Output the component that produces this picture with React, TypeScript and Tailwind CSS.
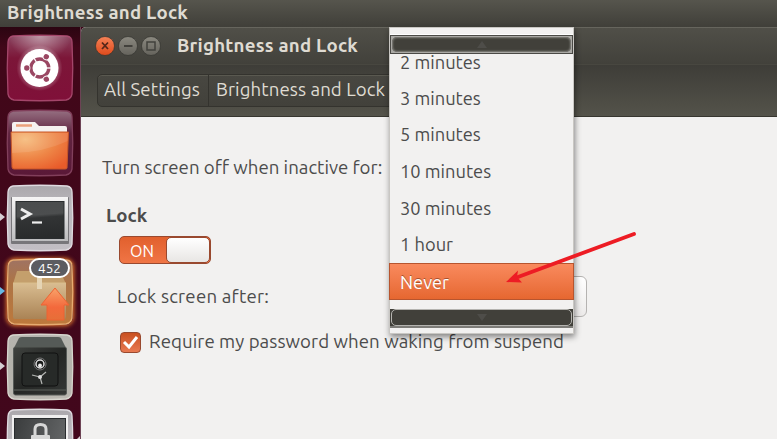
import React from 'react';

function TileBase({ id, from, mid, to, stroke }: { id: string; from: string; mid: string; to: string; stroke: string }) {
  return (
    <>
      <defs>
        <linearGradient id={id} x1="0" y1="0" x2="0" y2="1">
          <stop offset="0" stopColor={from} />
          <stop offset=".35" stopColor={mid} />
          <stop offset="1" stopColor={to} />
        </linearGradient>
      </defs>
      <path d="M6 1Q33 -.5 60 1Q65 2 65 7Q66.500 33 65 59Q64 64 59 65Q33 66.500 7 65Q2 64 1 59Q-.5 33 1 7Q1.500 2 6 1Z" fill={`url(#${id})`} stroke={stroke} strokeWidth="1.300" />
    </>
  );
}

function Tile({ children, arrow }: { children: React.ReactNode; arrow?: string }) {
  return (
    <div className="relative h-[66px] w-[66px] shrink-0">
      <svg width="66" height="66" viewBox="0 0 66 66" className="block overflow-visible">
        {arrow && <path d="M-7 28L-2 32L-7 36Z" fill={arrow} />}
        {children}
      </svg>
    </div>
  );
}

function DashTile() {
  return (
    <Tile>
      <TileBase id="dash" from="#8a4560" mid="#7c1638" to="#801039" stroke="#a4466a" />
      <defs>
        <radialGradient id="shine" cx=".5" cy="0" r=".5">
          <stop offset="0" stopColor="#fff" stopOpacity=".45" />
          <stop offset="1" stopColor="#fff" stopOpacity="0" />
        </radialGradient>
        <radialGradient id="halo">
          <stop offset=".7" stopColor="#fff" stopOpacity=".35" />
          <stop offset="1" stopColor="#fff" stopOpacity="0" />
        </radialGradient>
      </defs>
      <rect x="2" y="1" width="62" height="50" fill="url(#shine)" />
      <circle cx="32.500" cy="33" r="23" fill="url(#halo)" />
      <circle cx="32.500" cy="33" r="19" fill="#fff" />
      <circle cx="32.800" cy="33" r="9" fill="none" stroke="#9a4662" strokeWidth="3.400" />
      {[60, 180, 300].map((a) => (
        <g key={a} transform={`rotate(${a} 32.800 33)`}>
          <path d="M32.800 33H47" stroke="#fff" strokeWidth="1.300" transform="rotate(60 32.800 33)" />
          <circle cx="45.800" cy="33" r="3.600" fill="#fff" />
          <circle cx="45.800" cy="33" r="2.700" fill="#9a4662" />
        </g>
      ))}
    </Tile>
  );
}

function FolderTile() {
  return (
    <Tile>
      <TileBase id="files" from="#967082" mid="#602440" to="#5a1837" stroke="#813f5b" />
      <defs>
        <radialGradient id="folder" cx=".25" cy=".2" r=".95">
          <stop offset="0" stopColor="#f5ba79" />
          <stop offset=".55" stopColor="#ee8546" />
          <stop offset="1" stopColor="#e95b2a" />
        </radialGradient>
      </defs>
      <path d="M5 23V14Q5 12 7 12H28L32 16H58Q60 16 60 18V24Z" fill="#f5f1ef" />
      <path d="M9 15.500H25" stroke="#eaa07b" strokeWidth="2.500" />
      <path d="M4 22H61.500L60 58Q60 59 58 59H7Q5 59 5 57Z" fill="url(#folder)" stroke="#c75728" strokeWidth="1" />
      <path d="M4.500 23H61L60.700 31Q35 43 5 43Z" fill="#fff" opacity=".1" />
    </Tile>
  );
}

function TerminalTile() {
  return (
    <Tile arrow="#d6ced3">
      <TileBase id="termtile" from="#aaa7ab" mid="#bcb9be" to="#c2bec4" stroke="#dfdbe0" />
      <defs>
        <linearGradient id="termscreen" x1="0" y1="0" x2="0.100" y2="1">
          <stop offset="0" stopColor="#4a4c4d" />
          <stop offset=".4" stopColor="#4c4e4f" />
          <stop offset=".48" stopColor="#323435" />
          <stop offset="1" stopColor="#292b2c" />
        </linearGradient>
        <linearGradient id="termframe" x1="0" y1="0" x2="0" y2="1">
          <stop offset="0" stopColor="#f6f5f5" />
          <stop offset="1" stopColor="#bcbcbe" />
        </linearGradient>
      </defs>
      <rect x="4" y="12" width="58" height="47" rx="1" fill="#77767a" />
      <rect x="5" y="12" width="56" height="44" fill="url(#termframe)" />
      <rect x="9" y="16.500" width="48" height="37" fill="url(#termscreen)" stroke="#292c2e" />
      <path d="M14 24L23 29L14 34" fill="none" stroke="#eee" strokeWidth="3" />
      <path d="M25 37.500H35" stroke="#eee" strokeWidth="2.200" />
    </Tile>
  );
}

function UpdaterTile() {
  return (
    <div className="relative w-[66px] rounded-lg shadow-[0_0_4px_1px_#e3782c]">
      <Tile arrow="#67b9e5">
        <TileBase id="update" from="#9f7363" mid="#ad7446" to="#bd793c" stroke="#e7ab70" />
        <defs>
          <linearGradient id="box" x1="0" y1="0" x2="0" y2="1">
            <stop offset="0" stopColor="#d9bd91" />
            <stop offset="1" stopColor="#aa8355" />
          </linearGradient>
          <linearGradient id="up" x1="0" y1="0" x2="0" y2="1">
            <stop offset="0" stopColor="#f9a36a" />
            <stop offset=".6" stopColor="#f3693c" />
            <stop offset="1" stopColor="#e66f38" />
          </linearGradient>
        </defs>
        <path d="M6 25L10 12H53L59 25Z" fill="#c49f6c" />
        <path d="M6 24H59V58Q59 60 57 60H8Q6 60 6 58Z" fill="url(#box)" />
        <path d="M6 24H59" stroke="#d9bd8b" />
        <rect x="30" y="12" width="5" height="18" fill="#e5d4b4" />
        <path d="M48 29L62 46H57V61H40V46H34Z" fill="url(#up)" stroke="#ed6332" strokeWidth="1" />
      </Tile>
      <div className="absolute left-[22px] top-[-1px] flex h-[20px] w-[41px] items-center justify-center rounded-full border-2 border-white bg-[#5c5c61] text-[13.500px] leading-none text-white">452</div>
    </div>
  );
}

function SafeTile() {
  return (
    <Tile arrow="#d6ced3">
      <TileBase id="safe" from="#b6b4af" mid="#b4b3ac" to="#b9b7b0" stroke="#d7d6ce" />
      <defs>
        <linearGradient id="safeface" x1="0" y1="0" x2="1" y2="1">
          <stop offset="0" stopColor="#3f423f" />
          <stop offset=".5" stopColor="#252725" />
          <stop offset="1" stopColor="#343735" />
        </linearGradient>
      </defs>
      <path d="M7 14L12 4Q13 3 15 3H51Q53 3 54 4L59 14Z" fill="#555a57" />
      <rect x="6.500" y="13" width="53" height="48" rx="2" fill="url(#safeface)" stroke="#565a57" />
      <rect x="15" y="19" width="36" height="33" rx="3" fill="#272a28" stroke="#111" />
      <path d="M7 56H59" stroke="#4d504d" strokeWidth="1.500" />
      <circle cx="33" cy="30" r="6" fill="#181a19" stroke="#777" />
      <circle cx="33" cy="30" r="4" fill="none" stroke="#ddd" strokeWidth="1.500" />
      <circle cx="33" cy="31.500" r="1.900" fill="#eee" />
      <path d="M33 43L25 41M33 43L39 38M33 43L35 50" stroke="#b4b6b3" strokeWidth="1.200" />
      <circle cx="33" cy="43" r="2" fill="#ddd" />
    </Tile>
  );
}

function LockTile() {
  return (
    <Tile>
      <TileBase id="locktile" from="#aaa7ab" mid="#bcb9be" to="#c2bec4" stroke="#dfdbe0" />
      <defs>
        <linearGradient id="lockscreen" x1="0" y1="0" x2="1" y2="0.300">
          <stop offset="0" stopColor="#3a3c3d" />
          <stop offset="1" stopColor="#626465" />
        </linearGradient>
      </defs>
      <rect x="5" y="6" width="56" height="50" fill="#f0efef" />
      <rect x="7.500" y="9.500" width="51" height="46" fill="url(#lockscreen)" stroke="#292c2e" />
      <path d="M28 28V20Q28 15.500 33.500 15.500Q39 15.500 39 20V28" fill="none" stroke="#d7d7d7" strokeWidth="3" />
      <rect x="24" y="26" width="19" height="14" rx="1" fill="#d7d7d7" />
      <path d="M73 27L69 31H73Z" fill="#d6ced3" />
    </Tile>
  );
}

function WindowButton({ kind }: { kind: 'close' | 'min' | 'max' }) {
  const close = kind === 'close';
  return (
    <svg width="20" height="20" viewBox="0 0 20 20">
      <defs>
        <linearGradient id={`btn${kind}`} x1="0" y1="0" x2="0" y2="1">
          <stop offset="0" stopColor={close ? '#f58257' : '#8b8980'} />
          <stop offset="1" stopColor={close ? '#df4a1b' : '#65635c'} />
        </linearGradient>
      </defs>
      <circle cx="10" cy="10" r="9.500" fill={`url(#btn${kind})`} stroke="#34332f" strokeWidth=".7" />
      {kind === 'close' && <path d="M7 6.500L13 13M13 6.500L7 13" stroke="#562719" strokeWidth="1.800" />}
      {kind === 'min' && <path d="M6 10H14.500" stroke="#42413c" strokeWidth="1.800" />}
      {kind === 'max' && <rect x="6" y="6" width="8" height="8" fill="none" stroke="#42413c" strokeWidth="1.500" />}
    </svg>
  );
}

function ScrollButton({ up }: { up?: boolean }) {
  return (
    <div className={`flex h-[19px] shrink-0 items-center justify-center ${up ? 'border border-[#4b4a46] bg-[#aaa9a5] p-px' : 'border-b-2 border-[#7d7c78] bg-[#41403a] px-px'}`}>
      <div className={`flex h-full w-full items-center justify-center rounded-[5px] bg-[#41403a] ${up ? 'shadow-[inset_0_0_2px_1px_#85847f]' : 'border border-[#b5b4b0]'}`}>
        <svg width="10" height="7" viewBox="0 0 10 7">
          <path d={up ? 'M5 0L10 7H0Z' : 'M0 0H10L5 7Z'} fill="#4e4d49" />
        </svg>
      </div>
    </div>
  );
}

const delays = ['3 minutes', '5 minutes', '10 minutes', '30 minutes', '1 hour'];

function DelayMenu() {
  return (
    <div className="absolute left-[389px] top-[27px] flex h-[307px] w-[185px] flex-col border border-[#c9c7c3] bg-[#f2f1f0] text-[18.300px] shadow-[1px_3px_6px_rgba(0,0,0,0.45)]">
      <div className="h-[7px] shrink-0 border-b border-white" />
      <ScrollButton up />
      <div className="flex h-[25.500px] shrink-0 items-start pl-[10px] leading-[16px]">2 minutes</div>
      {delays.map((label) => (
        <div key={label} className="flex h-[36.700px] shrink-0 items-center pl-[10px]">{label}</div>
      ))}
      <div className="-mx-px flex h-[37px] shrink-0 items-center border border-[#b7552f] bg-linear-to-b from-[#f98a5d] to-[#e66730] pl-[10px] pt-px text-white [text-shadow:0_-1px_0_#a8502b]">Never</div>
      <div className="h-[9px] shrink-0" />
      <ScrollButton />
    </div>
  );
}

export default function App() {
  return (
    <div className="relative flex h-[439px] w-[777px] flex-col overflow-hidden bg-[#3c0819] font-['Ubuntu','Noto_Sans',sans-serif] text-[18.670px] leading-none text-[#4c4c4c]">
      <header className="flex h-[27px] shrink-0 items-center bg-linear-to-b from-[#56554d] to-[#403f39] pb-px pl-[7px] font-bold tracking-[0.230px] text-[#dfdbd2]">Brightness and Lock</header>
      <div className="flex min-h-0 flex-1">
        <nav className="flex w-[81px] shrink-0 flex-col gap-[8.800px] border-r border-[#6d4355] bg-linear-to-b from-[#2b0511] via-[#410719] via-5% to-[#42071c] pl-[7px] pt-[8px]">
          <DashTile />
          <FolderTile />
          <TerminalTile />
          <UpdaterTile />
          <SafeTile />
          <LockTile />
        </nav>
        <main className="flex min-w-0 flex-1 flex-col overflow-hidden rounded-tl-[5px] bg-[#f2f1f0]">
          <div className="flex h-[37px] shrink-0 items-center gap-[3px] border-t border-[#66655d] bg-linear-to-b from-[#504f48] to-[#42413b] pl-[14px]">
            <WindowButton kind="close" />
            <WindowButton kind="min" />
            <WindowButton kind="max" />
            <h1 className="ml-[13px] font-bold tracking-[0.230px] text-[#dfdbd2]">Brightness and Lock</h1>
          </div>
          <div className="flex h-[53px] shrink-0 items-center border-b border-[#37362f] border-t border-t-[#484740] bg-linear-to-b from-[#3e3d38] to-[#54534a] pl-[16px] text-[#dfdbd2]">
            <div className="flex h-[33px] rounded-[5px] border border-[#34332e] bg-linear-to-b from-[#484741] to-[#42413b] tracking-[0.080px] shadow-[inset_0_1px_0_#5a5950]">
              <button className="w-[111px] whitespace-nowrap border-r border-[#34332e] pl-[6px] text-left">All Settings</button>
              <button className="w-[190px] whitespace-nowrap pl-[7px] text-left">Brightness and Lock</button>
            </div>
          </div>
          <section className="flex flex-col items-start pl-[21px] pt-[42px]">
            <label className="h-[20px]">Turn screen off when inactive for:</label>
            <h2 className="ml-[4px] mt-[28px] h-[20px] font-bold">Lock</h2>
            <div className="ml-[17px] mt-[9px] flex h-[28px] w-[92px] rounded-[5px] border border-[#99492f] bg-linear-to-b from-[#e1602d] to-[#f07545]">
              <span className="flex w-[46px] items-center justify-center pr-[2px] pt-px text-[16px] text-white">ON</span>
              <span className="flex-1 rounded-[5px] border border-[#99492f] bg-linear-to-b from-white to-[#e8e6e4]" />
            </div>
            <div className="ml-[15px] mt-[12px] flex h-[41px] w-[470px] items-center justify-between">
              <label className="pt-[2px] tracking-[0.220px]">Lock screen after:</label>
              <div className="h-[41px] w-[190px] rounded-[6px] border border-[#b5b3b1] bg-linear-to-b from-white to-[#eceae9]" />
            </div>
            <label className="ml-[18px] mt-[14px] flex h-[22px] items-center tracking-[0.060px]">
              <span className="mr-[8px] flex h-[21px] w-[21px] items-center justify-center rounded-[4px] border border-[#99492f] bg-linear-to-b from-[#c9501f] to-[#e87951]">
                <svg width="17" height="17" viewBox="0 0 17 17"><path d="M2 8L7 13L15 3" fill="none" stroke="white" strokeWidth="3" /></svg>
              </span>
              Require my password when waking from suspend
            </label>
          </section>
        </main>
      </div>
      <DelayMenu />
      <svg className="absolute left-[500px] top-[225px]" width="145" height="65" viewBox="0 0 145 65">
        <path d="M134 9L18 52" stroke="#ed1c24" strokeWidth="3.800" strokeLinecap="round" />
        <path d="M6 57L18 45.500L17 52L22 57.500Z" fill="#ed1c24" />
      </svg>
    </div>
  );
}
